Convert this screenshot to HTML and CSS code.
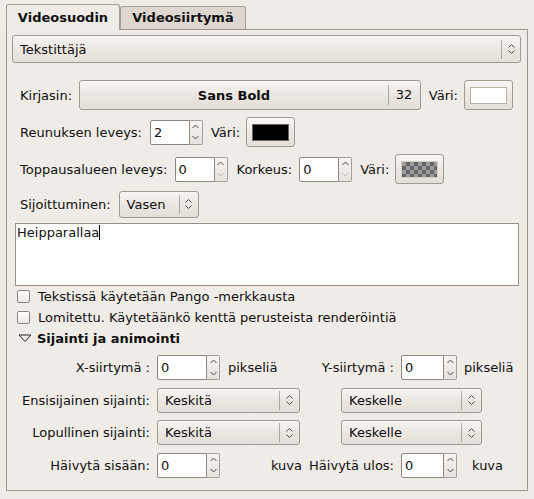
FILE: index.html
```html
<!DOCTYPE html>
<html lang="fi">
<head>
<meta charset="utf-8">
<title>Videosuodin</title>
<link rel="stylesheet" href="styles.css">
</head>
<body>
<div class="win">
  <div class="tabs">
    <div class="tab active">Videosuodin</div>
    <div class="tab">Videosiirtymä</div>
  </div>
  <div class="frame">
    <div class="combo combo-main">
      <span class="combo-text">Tekstittäjä</span>
      <span class="combo-sep"></span>
      <span class="combo-arrow"><svg width="7" height="12" viewBox="0 0 7 12"><polyline points="0.5,4.5 3.5,1.5 6.5,4.5"/><polyline points="0.5,7.5 3.5,10.5 6.5,7.5"/></svg></span>
    </div>

    <div class="row row-font">
      <span class="lbl">Kirjasin:</span>
      <div class="fontbtn">
        <span class="fontname">Sans Bold</span>
        <span class="fontsize">32</span>
      </div>
      <span class="lbl ml8">Väri:</span>
      <div class="colorbtn"><span class="swatch sw-white"></span></div>
    </div>

    <div class="row row-mid">
      <span class="lbl">Reunuksen leveys:</span>
      <div class="spin spin-s ml8">
        <span class="entry">2</span>
        <span class="arrows"><span class="arr"><svg width="7" height="5" viewBox="0 0 7 5"><polyline points="0.5,4 3.5,1 6.5,4"/></svg></span><span class="arr"><svg width="7" height="5" viewBox="0 0 7 5"><polyline points="0.5,1 3.5,4 6.5,1"/></svg></span></span>
      </div>
      <span class="lbl ml8">Väri:</span>
      <div class="colorbtn"><span class="swatch sw-black"></span></div>
    </div>

    <div class="row row-mid">
      <span class="lbl">Toppausalueen leveys:</span>
      <div class="spin spin-s ml7">
        <span class="entry">0</span>
        <span class="arrows"><span class="arr"><svg width="7" height="5" viewBox="0 0 7 5"><polyline points="0.5,4 3.5,1 6.5,4"/></svg></span><span class="arr off"><svg width="7" height="5" viewBox="0 0 7 5"><polyline points="0.5,1 3.5,4 6.5,1"/></svg></span></span>
      </div>
      <span class="lbl ml9">Korkeus:</span>
      <div class="spin spin-s ml7">
        <span class="entry">0</span>
        <span class="arrows"><span class="arr"><svg width="7" height="5" viewBox="0 0 7 5"><polyline points="0.5,4 3.5,1 6.5,4"/></svg></span><span class="arr off"><svg width="7" height="5" viewBox="0 0 7 5"><polyline points="0.5,1 3.5,4 6.5,1"/></svg></span></span>
      </div>
      <span class="lbl ml8">Väri:</span>
      <div class="colorbtn"><span class="swatch sw-check"></span></div>
    </div>

    <div class="row row-place">
      <span class="lbl">Sijoittuminen:</span>
      <div class="combo combo-place ml8">
        <span class="combo-text">Vasen</span>
        <span class="combo-sep"></span>
        <span class="combo-arrow"><svg width="7" height="12" viewBox="0 0 7 12"><polyline points="0.5,4.5 3.5,1.5 6.5,4.5"/><polyline points="0.5,7.5 3.5,10.5 6.5,7.5"/></svg></span>
      </div>
    </div>

    <div class="textview"><span class="tv-text">Heipparallaa</span><span class="caret"></span></div>

    <div class="check-row"><span class="checkbox"></span><span>Tekstissä käytetään Pango -merkkausta</span></div>
    <div class="check-row"><span class="checkbox"></span><span>Lomitettu. Käytetäänkö kenttä perusteista renderöintiä</span></div>
    <div class="expander"><svg class="exp-tri" width="14" height="9" viewBox="0 0 14 9"><polygon points="1,1 13,1 7,7.5"/></svg><span class="exp-title">Sijainti ja animointi</span></div>

    <div class="grid">
      <span class="g-lbl">X-siirtymä :</span>
      <div class="spin spin-l">
        <span class="entry">0</span>
        <span class="arrows"><span class="arr"><svg width="7" height="5" viewBox="0 0 7 5"><polyline points="0.5,4 3.5,1 6.5,4"/></svg></span><span class="arr"><svg width="7" height="5" viewBox="0 0 7 5"><polyline points="0.5,1 3.5,4 6.5,1"/></svg></span></span>
      </div>
      <span class="g-unit">pikseliä</span>
      <span class="g-lbl g-lbl-r">Y-siirtymä :</span>
      <div class="spin spin-r">
        <span class="entry">0</span>
        <span class="arrows"><span class="arr"><svg width="7" height="5" viewBox="0 0 7 5"><polyline points="0.5,4 3.5,1 6.5,4"/></svg></span><span class="arr"><svg width="7" height="5" viewBox="0 0 7 5"><polyline points="0.5,1 3.5,4 6.5,1"/></svg></span></span>
      </div>
      <span class="g-unit">pikseliä</span>

      <span class="g-lbl">Ensisijainen sijainti:</span>
      <div class="combo combo-g1">
        <span class="combo-text">Keskitä</span>
        <span class="combo-sep"></span>
        <span class="combo-arrow"><svg width="7" height="12" viewBox="0 0 7 12"><polyline points="0.5,4.5 3.5,1.5 6.5,4.5"/><polyline points="0.5,7.5 3.5,10.5 6.5,7.5"/></svg></span>
      </div>
      <div class="combo combo-g2">
        <span class="combo-text">Keskelle</span>
        <span class="combo-sep"></span>
        <span class="combo-arrow"><svg width="7" height="12" viewBox="0 0 7 12"><polyline points="0.5,4.5 3.5,1.5 6.5,4.5"/><polyline points="0.5,7.5 3.5,10.5 6.5,7.5"/></svg></span>
      </div>

      <span class="g-lbl">Lopullinen sijainti:</span>
      <div class="combo combo-g1">
        <span class="combo-text">Keskitä</span>
        <span class="combo-sep"></span>
        <span class="combo-arrow"><svg width="7" height="12" viewBox="0 0 7 12"><polyline points="0.5,4.5 3.5,1.5 6.5,4.5"/><polyline points="0.5,7.5 3.5,10.5 6.5,7.5"/></svg></span>
      </div>
      <div class="combo combo-g2">
        <span class="combo-text">Keskelle</span>
        <span class="combo-sep"></span>
        <span class="combo-arrow"><svg width="7" height="12" viewBox="0 0 7 12"><polyline points="0.5,4.5 3.5,1.5 6.5,4.5"/><polyline points="0.5,7.5 3.5,10.5 6.5,7.5"/></svg></span>
      </div>

      <span class="g-lbl">Häivytä sisään:</span>
      <div class="spin spin-l">
        <span class="entry">0</span>
        <span class="arrows"><span class="arr"><svg width="7" height="5" viewBox="0 0 7 5"><polyline points="0.5,4 3.5,1 6.5,4"/></svg></span><span class="arr"><svg width="7" height="5" viewBox="0 0 7 5"><polyline points="0.5,1 3.5,4 6.5,1"/></svg></span></span>
      </div>
      <span class="g-unit g-unit-end">kuva</span>
      <span class="g-lbl g-lbl-r">Häivytä ulos:</span>
      <div class="spin spin-r">
        <span class="entry">0</span>
        <span class="arrows"><span class="arr"><svg width="7" height="5" viewBox="0 0 7 5"><polyline points="0.5,4 3.5,1 6.5,4"/></svg></span><span class="arr"><svg width="7" height="5" viewBox="0 0 7 5"><polyline points="0.5,1 3.5,4 6.5,1"/></svg></span></span>
      </div>
      <span class="g-unit g-unit-kuva">kuva</span>
    </div>
  </div>
</div>
</body>
</html>
```
FILE: styles.css
```css
* { box-sizing: border-box; }
html, body { margin: 0; padding: 0; }
body {
  width: 534px;
  height: 499px;
  overflow: hidden;
  background: #efebe7;
  font-family: "DejaVu Sans", sans-serif;
  font-size: 13px;
  color: #101010;
}
.win { padding: 4px 6px 0 6px; }

/* tabs */
.tabs {
  display: flex;
  align-items: flex-end;
  height: 26px;
  margin-bottom: -1px;
  position: relative;
  z-index: 1;
}
.tab {
  width: 126px;
  height: 23px;
  margin-bottom: 1px;
  border: 1px solid #a69e94;
  border-bottom: none;
  border-radius: 3px 3px 0 0;
  background: #ddd7d0;
  font-weight: bold;
  text-align: center;
  line-height: 22px;
}
.tab.active {
  width: 114px;
  height: 26px;
  margin-bottom: 0;
  padding-top: 2px;
  background: #efebe7;
}

/* notebook frame */
.frame {
  height: 462px;
  border: 1px solid #9d958b;
  padding: 5px 6px 0 5px;
  background: #efebe7;
}

/* combo box */
.combo {
  display: flex;
  align-items: center;
  height: 27px;
  border: 1px solid #a39a8f;
  border-radius: 3px;
  background: linear-gradient(#f7f5f3, #ebe6e1 50%, #e4ded8);
}
.combo-text { flex: 1; padding-left: 7px; white-space: nowrap; }
.combo-sep { width: 1px; height: 19px; background: #b0a89e; }
.combo-arrow { width: 18px; display: flex; justify-content: center; align-items: center; }
.combo-arrow svg, .arr svg { fill: none; stroke: #4c4944; stroke-width: 1; }
.combo-main { height: 28px; }
.combo-place { width: 80px; height: 27px; }
.combo-place .combo-arrow { width: 18px; }

/* rows */
.row { display: flex; align-items: center; margin-left: 8px; margin-right: 8px; }
.row-font { margin-top: 17px; height: 30px; }
.row-mid { margin-top: 7px; height: 30px; }
.row-place { margin-top: 7px; height: 26px; }
.lbl { white-space: nowrap; }
.ml7 { margin-left: 7px; }
.ml8 { margin-left: 8px; }
.ml9 { margin-left: 9px; }

.fontbtn {
  flex: 1;
  margin-left: 7px;
  height: 30px;
  display: flex;
  align-items: center;
  border: 1px solid #a39a8f;
  border-radius: 3px;
  background: linear-gradient(#f7f5f3, #ebe6e1 50%, #e4ded8);
}
.fontname { flex: 1; text-align: center; font-weight: bold; }
.fontsize {
  width: 32px;
  height: 20px;
  line-height: 20px;
  border-left: 1px solid #b0a89e;
  padding-left: 7px;
}

.colorbtn {
  width: 49px;
  height: 30px;
  margin-left: 6px;
  border: 1px solid #a39a8f;
  border-radius: 3px;
  background: linear-gradient(#f8f6f4, #ece7e2 50%, #e5dfd9);
  display: flex;
  align-items: center;
  justify-content: center;
}
.swatch { width: 37px; height: 17px; border: 1px solid #b9b1a7; }
.sw-white { background: #ffffff; }
.sw-black { background: #000000; border-color: #6d6760; }
.sw-check {
  border-color: #d4cdc5;
  background: repeating-conic-gradient(#666666 0 25%, #9c9c9c 0 50%) 0 0 / 8px 8px;
}

/* spin button */
.spin { display: flex; height: 25px; }
.spin-s { width: 53px; height: 25px; }
.entry {
  flex: 1;
  background: #ffffff;
  border: 1px solid #8e877f;
  border-radius: 2px 0 0 2px;
  padding-left: 3px;
  line-height: 23px;
}
.arrows {
  width: 13px;
  display: flex;
  flex-direction: column;
  border: 1px solid #a69f96;
  border-left: none;
  border-radius: 0 2px 2px 0;
  background: linear-gradient(#f6f4f2, #e6e1dc);
}
.arr { flex: 1; display: flex; align-items: center; justify-content: center; }
.arr.off svg { stroke: #bdb6ae; }

/* text view */
.textview {
  margin: 6px 2px 0 3px;
  height: 63px;
  border: 1px solid #9a9186;
  background: #ffffff;
  padding: 1px 1px;
  line-height: 15px;
}
.caret { display: inline-block; width: 1px; height: 15px; background: #000; vertical-align: top; }

/* check rows */
.check-row {
  display: flex;
  align-items: center;
  height: 21px;
  margin-left: 5px;
  margin-top: 0;
}
.check-row:first-of-type { margin-top: 1px; }
.checkbox {
  width: 13px;
  height: 13px;
  margin-right: 8px;
  border: 1px solid #8c857d;
  border-radius: 2px;
  background: linear-gradient(#ffffff, #ece8e4);
}
.expander { display: flex; align-items: center; height: 21px; margin-left: 6px; }
.exp-tri { margin-right: 5px; fill: none; stroke: #222; stroke-width: 1; }
.exp-title { font-weight: bold; }

/* grid */
.grid {
  margin-top: 6px;
  margin-left: 8px;
  display: grid;
  grid-template-columns: 137px 71px 80px 93px 63px 51px;
  grid-template-rows: 25px 25px 25px 25px;
  row-gap: 7.5px;
  align-items: center;
}
.g-lbl { text-align: right; padding-right: 7px; white-space: nowrap; }
.g-lbl-r { padding-right: 7px; }
.g-unit { white-space: nowrap; }
.g-unit-end { text-align: right; padding-right: 6px; }
.g-unit-kuva { padding-left: 8px; }
.spin-l { width: 63px; }
.spin-r { width: 56px; }
.combo-g1 { grid-column: 2 / 4; width: 143px; height: 25px; }
.combo-g2 { grid-column: 4 / 7; margin-left: 33px; width: 141px; height: 25px; }
.grid .combo-arrow { width: 19px; }
```
